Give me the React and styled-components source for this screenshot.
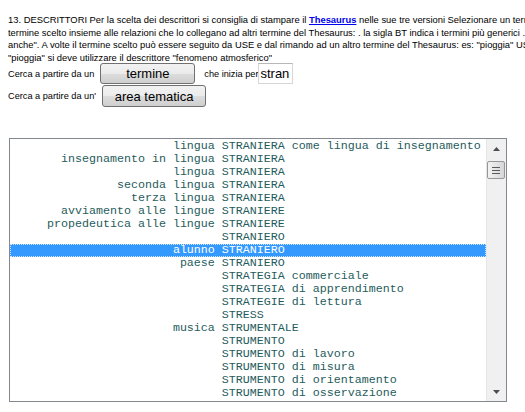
import React from 'react'
import styled, { createGlobalStyle } from 'styled-components'

const GlobalStyle = createGlobalStyle`
  html, body {
    margin: 0;
    background: #fff;
    overflow: hidden;
  }
`

const Page = styled.div`
  width: 640px;
  padding: 14px 0 0 8px;
  font-family: "Liberation Sans", Arial, sans-serif;
  color: #000;
`

const Intro = styled.p`
  margin: 0;
  font-size: 9.4px;
  line-height: 12.5px;
  white-space: nowrap;
`

const ThesaurusLink = styled.a`
  color: #0000ee;
  font-weight: bold;
  text-decoration: underline;
`

const SearchRow = styled.div`
  display: flex;
  align-items: center;
  height: ${p => p.$h}px;
`

const Label = styled.span`
  font-size: 9.2px;
  margin-right: ${p => p.$gap || 0}px;
`

const Button = styled.button`
  box-sizing: border-box;
  flex-shrink: 0;
  width: ${p => p.$w}px;
  height: ${p => p.$h}px;
  margin: 0 ${p => p.$after || 0}px 0 0;
  padding: 0;
  border: 1px solid #707070;
  border-radius: 3px;
  background: linear-gradient(#f2f2f2 0%, #ebebeb 50%, #dddddd 51%, #cfcfcf 100%);
  font-family: "Liberation Sans", Arial, sans-serif;
  font-size: 13px;
  color: #000;
`

const TermInput = styled.input`
  box-sizing: border-box;
  width: 35px;
  height: 21px;
  padding: 0 1px;
  border: 1px solid #d6d6d6;
  border-top-color: #b8b8b8;
  font-family: "Liberation Sans", Arial, sans-serif;
  font-size: 13px;
  color: #000;
  outline: none;
`

const ListBox = styled.div`
  box-sizing: border-box;
  display: flex;
  width: 498px;
  height: 264px;
  margin-top: 29px;
  margin-left: 1px;
  border: 1px solid #828790;
  background: #fff;
  overflow: hidden;
`

const Rows = styled.div`
  flex: 1;
  padding-top: 1px;
  overflow: hidden;
`

const Row = styled.div`
  box-sizing: border-box;
  height: 13px;
  padding-left: 2px;
  font-family: "Liberation Mono", "Courier New", monospace;
  font-size: 11.67px;
  line-height: 13px;
  white-space: pre;
  color: ${p => (p.$selected ? '#fff' : '#1f5c5c')};
  background: ${p => (p.$selected ? '#3399ff' : 'transparent')};
  outline: ${p => (p.$selected ? '1px dotted #cfe4ff' : 'none')};
  outline-offset: -1px;
`

const ScrollBar = styled.div`
  width: 19px;
  display: flex;
  flex-direction: column;
  background: #f0f0f0;
  border-left: 1px solid #e6e6e6;
`

const ArrowButton = styled.div`
  height: 19px;
  display: flex;
  align-items: center;
  justify-content: center;
`

const Track = styled.div`
  flex: 1;
  padding-top: 3px;
`

const Thumb = styled.div`
  box-sizing: border-box;
  width: 18px;
  height: 18px;
  border: 1px solid #979797;
  border-radius: 2px;
  background: linear-gradient(90deg, #f3f3f3, #e4e4e4 50%, #d6d6d6);
  display: flex;
  flex-direction: column;
  align-items: center;
  justify-content: center;
  gap: 2px;
`

const Grip = styled.span`
  width: 8px;
  height: 1px;
  background: #5a5a5a;
`

const rows = [
  ['lingua', 'STRANIERA come lingua di insegnamento'],
  ['insegnamento in lingua', 'STRANIERA'],
  ['lingua', 'STRANIERA'],
  ['seconda lingua', 'STRANIERA'],
  ['terza lingua', 'STRANIERA'],
  ['avviamento alle lingue', 'STRANIERE'],
  ['propedeutica alle lingue', 'STRANIERE'],
  ['', 'STRANIERO'],
  ['alunno', 'STRANIERO', true],
  ['paese', 'STRANIERO'],
  ['', 'STRATEGIA commerciale'],
  ['', 'STRATEGIA di apprendimento'],
  ['', 'STRATEGIE di lettura'],
  ['', 'STRESS'],
  ['musica', 'STRUMENTALE'],
  ['', 'STRUMENTO'],
  ['', 'STRUMENTO di lavoro'],
  ['', 'STRUMENTO di misura'],
  ['', 'STRUMENTO di orientamento'],
  ['', 'STRUMENTO di osservazione'],
]

function Arrow({ down }) {
  return (
    <svg width="7" height="4" viewBox="0 0 7 4">
      <path d={down ? 'M0 0H7L3.5 4Z' : 'M3.5 0L7 4H0Z'} fill="#4d4d4d" />
    </svg>
  )
}

export default function App() {
  return (
    <Page>
      <GlobalStyle />
      <Intro>
        13. DESCRITTORI Per la scelta dei descrittori si consiglia di stampare il{' '}
        <ThesaurusLink href="#">Thesaurus</ThesaurusLink> nelle sue tre versioni Selezionare un termine per visualizzare il
        <br />
        termine scelto insieme alle relazioni che lo collegano ad altri termine del Thesaurus: . la sigla BT indica i termini più generici . la sigla NT
        <br />
        anche". A volte il termine scelto può essere seguito da USE e dal rimando ad un altro termine del Thesaurus: es: "pioggia" USE "fenomeno
        <br />
        "pioggia" si deve utilizzare il descrittore "fenomeno atmosferico"
      </Intro>

      <SearchRow $h={19}>
        <Label $gap={6}>Cerca a partire da un</Label>
        <Button $w={95} $h={21} $after={9}>termine</Button>
        <Label>che inizia per</Label>
        <TermInput defaultValue="stran" />
      </SearchRow>

      <SearchRow $h={26}>
        <Label $gap={6}>Cerca a partire da un'</Label>
        <Button $w={104} $h={22}>area tematica</Button>
      </SearchRow>

      <ListBox>
        <Rows>
          {rows.map(([prefix, term, selected], i) => (
            <Row key={i} $selected={selected}>
              {prefix.padStart(29) + ' ' + term}
            </Row>
          ))}
        </Rows>
        <ScrollBar>
          <ArrowButton><Arrow /></ArrowButton>
          <Track>
            <Thumb>
              <Grip />
              <Grip />
              <Grip />
            </Thumb>
          </Track>
          <ArrowButton><Arrow down /></ArrowButton>
        </ScrollBar>
      </ListBox>
    </Page>
  )
}
